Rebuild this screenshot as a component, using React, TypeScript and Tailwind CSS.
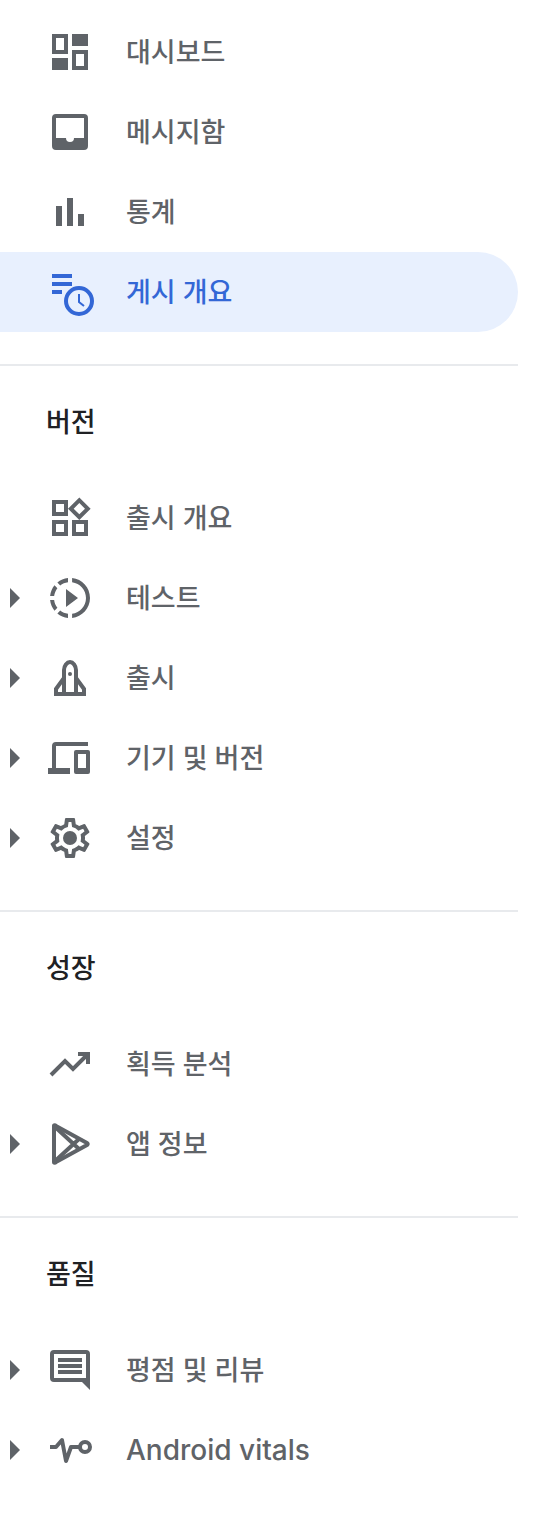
import type { ReactNode } from 'react';

const icons: Record<string, ReactNode> = {
  dashboard: (
    <path
      fillRule="evenodd"
      d="M6 6h16v20H6zM10 10v12h8V10zM26 6h16v12H26zM6 30h16v12H6zM26 22h16v20H26zM30 26v12h8V26z"
    />
  ),
  inbox: (
    <path
      fillRule="evenodd"
      d="M10 6h28a4 4 0 0 1 4 4v28a4 4 0 0 1-4 4H10a4 4 0 0 1-4-4V10a4 4 0 0 1 4-4zM10 10v20h10a4 4 0 0 0 8 0h10V10z"
    />
  ),
  stats: <path d="M10 18h6v20h-6zM21 10h6v28h-6zM32 26h6v12h-6z" />,
  publishing: (
    <>
      <path d="M6 6h20v4H6zM6 14h20v4H6zM6 22h10v4H6z" />
      <circle cx="33" cy="33" r="13" fill="none" stroke="currentColor" strokeWidth="4" />
      <path d="M33 26v8l5 4" fill="none" stroke="currentColor" strokeWidth="2" />
    </>
  ),
  widgets: (
    <path
      transform="scale(2)"
      d="M16.66 4.52l2.83 2.83-2.83 2.83-2.83-2.83 2.83-2.83M9 5v4H5V5h4m10 10v4h-4v-4h4M9 15v4H5v-4h4m7.66-13.31L11 7.34 16.66 13l5.66-5.66-5.66-5.65zM11 3H3v8h8V3zm10 10h-8v8h8v-8zm-10 0H3v8h8v-8z"
    />
  ),
  testing: (
    <path
      transform="scale(2)"
      d="M10 7.5v9l6-4.5zM11 4.07V2.05c-2.01.2-3.84 1-5.32 2.21L7.1 5.69c1.11-.86 2.44-1.44 3.9-1.62zM5.69 7.1L4.26 5.68C3.05 7.16 2.25 8.99 2.05 11h2.02c.18-1.46.76-2.79 1.62-3.9zM4.07 13H2.05c.2 2.01 1 3.84 2.21 5.32l1.43-1.43c-.86-1.1-1.44-2.43-1.62-3.89zm1.61 6.74C7.16 20.95 9 21.75 11 21.95v-2.02c-1.46-.18-2.79-.76-3.9-1.62l-1.42 1.43zM22 12c0 5.16-3.92 9.42-8.95 9.95v-2.02C16.97 19.41 20 16.05 20 12s-3.03-7.41-6.95-7.93V2.05C18.08 2.58 22 6.84 22 12z"
    />
  ),
  rocket: (
    <>
      <path
        d="M18 40V16c0-4 3-8 6-8s6 4 6 8v24M18 24l-8 11v5h28v-5l-8-11"
        fill="none"
        stroke="currentColor"
        strokeWidth="4"
      />
      <circle cx="24" cy="20" r="2" />
    </>
  ),
  devices: (
    <path
      fillRule="evenodd"
      d="M10 8h32v4H10v22h14v6H2v-6h4V12a4 4 0 0 1 4-4zM30 16h12a2 2 0 0 1 2 2v20a2 2 0 0 1-2 2H30a2 2 0 0 1-2-2V18a2 2 0 0 1 2-2zM32 20v14h8V20z"
    />
  ),
  settings: (
    <>
      <path
        transform="scale(2)"
        d="M19.43 12.98c.04-.32.07-.64.07-.98 0-.34-.03-.66-.07-.98l2.11-1.65c.19-.15.24-.42.12-.64l-2-3.46c-.09-.16-.26-.25-.44-.25-.06 0-.12.01-.17.03l-2.49 1c-.52-.4-1.08-.73-1.69-.98l-.38-2.65C14.46 2.18 14.25 2 14 2h-4c-.25 0-.46.18-.49.42l-.38 2.65c-.61.25-1.17.59-1.69.98l-2.49-1c-.06-.02-.12-.03-.18-.03-.17 0-.34.09-.43.25l-2 3.46c-.13.22-.07.49.12.64l2.11 1.65c-.04.32-.07.65-.07.98 0 .33.03.66.07.98l-2.11 1.65c-.19.15-.24.42-.12.64l2 3.46c.09.16.26.25.44.25.06 0 .12-.01.17-.03l2.49-1c.52.4 1.08.73 1.69.98l.38 2.65c.03.24.24.42.49.42h4c.25 0 .46-.18.49-.42l.38-2.65c.61-.25 1.17-.59 1.69-.98l2.49 1c.06.02.12.03.18.03.17 0 .34-.09.43-.25l2-3.46c.12-.22.07-.49-.12-.64l-2.11-1.65zm-1.98-1.71c.04.31.05.52.05.73 0 .21-.02.43-.05.73l-.14 1.13.89.7 1.08.84-.7 1.21-1.27-.51-1.04-.42-.9.68c-.43.32-.84.56-1.25.73l-1.06.43-.16 1.13-.2 1.35h-1.4l-.19-1.35-.16-1.13-1.06-.43c-.43-.18-.83-.41-1.23-.71l-.91-.7-1.06.43-1.27.51-.7-1.21 1.08-.84.89-.7-.14-1.13c-.03-.31-.05-.54-.05-.74s.02-.43.05-.73l.14-1.13-.89-.7-1.08-.84.7-1.21 1.27.51 1.04.42.9-.68c.43-.32.84-.56 1.25-.73l1.06-.43.16-1.13.2-1.35h1.39l.19 1.35.16 1.13 1.06.43c.43.18.83.41 1.23.71l.91.7 1.06-.43 1.27-.51.7 1.21-1.07.85-.89.7.14 1.13z"
      />
      <circle cx="24" cy="24" r="7" />
    </>
  ),
  trending: (
    <path
      d="M5 35l14-14 8 8 14-14M32 14h10v10"
      fill="none"
      stroke="currentColor"
      strokeWidth="4"
    />
  ),
  play: (
    <>
      <path
        d="M8 6v36c0 1 1 1 2 0l31-17c1-1 1-1 0-2L10 6C9 5 8 5 8 6z"
        fill="none"
        stroke="currentColor"
        strokeWidth="4"
        strokeLinejoin="round"
      />
      <path d="M8 6l25 23M8 42l25-23" fill="none" stroke="currentColor" strokeWidth="4" />
    </>
  ),
  reviews: (
    <path
      fillRule="evenodd"
      d="M8 4h32a4 4 0 0 1 4 4v36l-8-8H8a4 4 0 0 1-4-4V8a4 4 0 0 1 4-4zM8 8v24h32V8zM12 12h24v4H12zM12 18h24v4H12zM12 24h24v4H12z"
    />
  ),
  vitals: (
    <>
      <path
        d="M4 21h6l6-7 4 21 5-14h8"
        fill="none"
        stroke="currentColor"
        strokeWidth="4"
        strokeLinejoin="round"
      />
      <circle cx="39" cy="21" r="5" fill="none" stroke="currentColor" strokeWidth="4" />
    </>
  ),
};

interface NavItem {
  label: string;
  icon: string;
  expandable?: boolean;
  active?: boolean;
  latin?: boolean;
}

interface NavSection {
  title?: string;
  items: NavItem[];
}

const sections: NavSection[] = [
  {
    items: [
      { label: '대시보드', icon: 'dashboard' },
      { label: '메시지함', icon: 'inbox' },
      { label: '통계', icon: 'stats' },
      { label: '게시 개요', icon: 'publishing', active: true },
    ],
  },
  {
    title: '버전',
    items: [
      { label: '출시 개요', icon: 'widgets' },
      { label: '테스트', icon: 'testing', expandable: true },
      { label: '출시', icon: 'rocket', expandable: true },
      { label: '기기 및 버전', icon: 'devices', expandable: true },
      { label: '설정', icon: 'settings', expandable: true },
    ],
  },
  {
    title: '성장',
    items: [
      { label: '획득 분석', icon: 'trending' },
      { label: '앱 정보', icon: 'play', expandable: true },
    ],
  },
  {
    title: '품질',
    items: [
      { label: '평점 및 리뷰', icon: 'reviews', expandable: true },
      { label: 'Android vitals', icon: 'vitals', expandable: true, latin: true },
    ],
  },
];

function NavRow({ label, icon, expandable, active, latin }: NavItem) {
  return (
    <li>
      <a
        href="#"
        aria-current={active ? 'page' : undefined}
        className={`flex h-20 items-center rounded-r-full ${active ? 'bg-[#e8f0fe] text-[#3367d6]' : 'text-[#5f6368]'}`}
      >
        <span className="flex w-[46px] shrink-0 pl-2.5">
          {expandable && (
            <svg viewBox="0 0 10 20" className="h-5 w-2.5 fill-current" aria-hidden="true">
              <path d="M0 0l10 10L0 20z" />
            </svg>
          )}
        </span>
        <svg viewBox="0 0 48 48" className="size-12 shrink-0 fill-current" aria-hidden="true">
          {icons[icon]}
        </svg>
        <span className={latin ? "pl-8 font-['Inter',sans-serif] text-[28px]" : 'pl-8'}>{label}</span>
      </a>
    </li>
  );
}

export default function App() {
  return (
    <nav className="bg-white pt-3 pr-[18px] pb-8 font-['Open_Sans','Noto_Sans_CJK_KR',sans-serif] text-[27px] leading-10 font-medium">
      {sections.map((section) => (
        <section
          key={section.title ?? 'main'}
          className="not-first:mt-8 not-first:border-t-2 not-first:border-[#e8eaed]"
        >
          {section.title && (
            <h2 className="py-9 pl-[46px] text-[#202124]">{section.title}</h2>
          )}
          <ul>
            {section.items.map((item) => (
              <NavRow key={item.label} {...item} />
            ))}
          </ul>
        </section>
      ))}
    </nav>
  );
}
